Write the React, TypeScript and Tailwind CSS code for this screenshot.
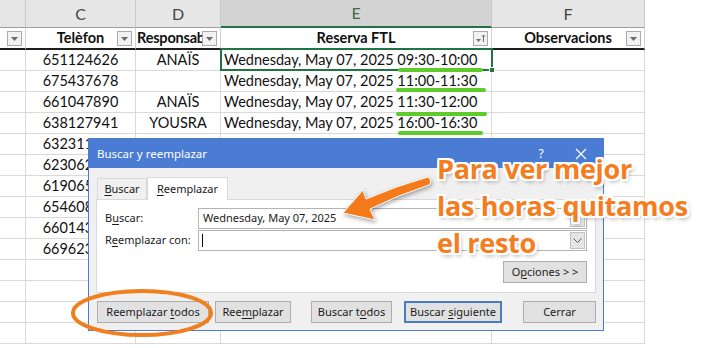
import React from "react";

const cols = [26, 110, 85, 271, 153];
const letters = ["", "C", "D", "E", "F"];

const rows: [string, string, string, string][] = [
  ["651124626", "ANAÏS", "Wednesday, May 07, 2025", "09:30-10:00"],
  ["675437678", "", "Wednesday, May 07, 2025", "11:00-11:30"],
  ["661047890", "ANAÏS", "Wednesday, May 07, 2025", "11:30-12:00"],
  ["638127941", "YOUSRA", "Wednesday, May 07, 2025", "16:00-16:30"],
  ["632311458", "", "", ""],
  ["623062917", "", "", ""],
  ["619065340", "", "", ""],
  ["654608123", "", "", ""],
  ["660143872", "", "", ""],
  ["669623015", "", "", ""],
  ["", "", "", ""],
  ["", "", "", ""],
  ["", "", "", ""],
  ["", "", "", ""],
];

const FilterBtn = ({ sort }: { sort?: boolean }) => (
  <span className="absolute right-[3px] top-[3px] w-[15px] h-[15px] border border-[#ababab] bg-[#f2f2f2] flex items-center justify-center">
    {sort ? (
      <svg width="11" height="9" viewBox="0 0 11 9">
        <path d="M1 5h5L3.5 8z" fill="#6b6b6b" />
        <path d="M8.5 1v7M7 2.6L8.5 1 10 2.6" stroke="#6b6b6b" strokeWidth="1" fill="none" />
      </svg>
    ) : (
      <svg width="7" height="4" viewBox="0 0 7 4">
        <path d="M0 0h7L3.5 4z" fill="#6b6b6b" />
      </svg>
    )}
  </span>
);

const U = ({ children }: { children: React.ReactNode }) => <span className="underline underline-offset-2">{children}</span>;

const Btn = ({ w, children, focus }: { w: string; children: React.ReactNode; focus?: boolean }) => (
  <div
    className={`${w} h-[22px] flex items-center justify-center bg-[#e1e1e1] ${
      focus ? "border-2 border-[#4a7cc4]" : "border border-[#adadad]"
    } text-[#1a1a1a]`}
  >
    <span className="whitespace-pre">{children}</span>
  </div>
);

function Sheet() {
  return (
    <div className="flex flex-col font-['Lato',sans-serif] text-[14.5px] text-[#111]">
      <div className="flex h-[28px] bg-[#e6e6e6]">
        {cols.map((w, i) => (
          <div
            key={i}
            style={{ width: w }}
            className={`h-full flex items-center justify-center border-r border-[#c8c8c8] text-[16px] ${
              i === 3 ? "bg-[#d3d3d3] text-[#3d6b4c] border-b-2 border-b-[#217346]" : "text-[#444] border-b border-b-[#9e9e9e]"
            }`}
          >
            {letters[i]}
          </div>
        ))}
        <div className="flex-1 bg-white" />
      </div>
      <div className="flex h-[22px]">
        {["", "Telèfon", "Responsab", "Reserva FTL", "Observacions"].map((t, i) => (
          <div
            key={i}
            style={{ width: cols[i] }}
            className="relative h-full border-r border-[#d4d4d4] border-b-2 border-b-[#1e1e1e] bg-white flex items-center justify-center font-bold text-[14.5px] overflow-hidden"
          >
            <span className={i === 2 ? "w-full pl-[1px] text-left whitespace-nowrap tracking-[-0.2px]" : ""}>{t}</span>
            <FilterBtn sort={i === 3} />
          </div>
        ))}
        <div className="flex-1" />
      </div>
      {rows.map((r, ri) => (
        <div key={ri} className="flex h-[21px]">
          {cols.map((w, i) => (
            <div
              key={i}
              style={{ width: w }}
              className={`h-full border-r border-b border-[#d9d9d9] flex items-center whitespace-nowrap overflow-hidden ${
                i === 3 ? "pl-[3px]" : "justify-center"
              }`}
            >
              {i === 1 ? r[0] : i === 2 ? r[1] : i === 3 && r[2] ? `${r[2]} ${r[3]}` : ""}
            </div>
          ))}
          <div className="flex-1" />
        </div>
      ))}
    </div>
  );
}

function Dialog() {
  return (
    <div className="absolute left-[88px] top-[138px] w-[516px] h-[193px] border border-[#4a7cd4] bg-[#f0f0f0] flex flex-col font-['Noto_Sans',sans-serif] text-[11px] text-[#1a1a1a]">
      <div className="h-[29px] bg-[#4a7cd4] flex items-center pl-[8px] text-white text-[11.5px]">
        <span className="flex-1">Buscar y reemplazar</span>
        <span className="w-[20px] text-center text-[12px] mr-[24px]">?</span>
        <svg width="12" height="12" viewBox="0 0 12 12" className="mr-[16px]">
          <path d="M1 1l10 10M11 1L1 11" stroke="#fff" strokeWidth="1.2" />
        </svg>
      </div>
      <div className="flex flex-col px-[7px] pt-[8px]">
        <div className="flex items-end h-[23px] pl-[1px]">
          <div className="h-[21px] w-[50px] border border-b-0 border-[#d9d9d9] flex items-center justify-center">
            <span>
              <U>B</U>uscar
            </span>
          </div>
          <div className="h-[23px] w-[81px] border border-b-0 border-[#d9d9d9] bg-white flex items-center justify-center -mb-px relative z-10">
            <span>
              <U>R</U>eemplazar
            </span>
          </div>
        </div>
        <div className="h-[94px] w-[500px] bg-white border border-[#d9d9d9] flex flex-col pl-[8px] pr-[8px] pt-[8px]">
          <div className="flex items-center h-[21px]">
            <span className="w-[93px]">
              B<U>u</U>scar:
            </span>
            <div className="flex-1 h-[21px] border border-[#b4b4b4] bg-white flex items-center pl-[4px] relative">
              <span>Wednesday, May 07, 2025</span>
              <span className="absolute right-[1px] top-[1px] w-[15px] h-[17px] bg-[#e5e5e5] border border-[#c2c2c2]" />
            </div>
          </div>
          <div className="flex items-center h-[21px] mt-[1px]">
            <span className="w-[93px]">
              R<U>e</U>emplazar con:
            </span>
            <div className="flex-1 h-[21px] border border-[#b4b4b4] bg-white flex items-center pl-[3px] relative">
              <span className="w-px h-[13px] bg-black" />
              <span className="absolute right-[1px] top-[1px] w-[15px] h-[17px] bg-[#e5e5e5] border border-[#c2c2c2] flex items-center justify-center">
                <svg width="9" height="5" viewBox="0 0 9 5">
                  <path d="M0.5 0.5L4.5 4.5 8.5 0.5" stroke="#555" fill="none" />
                </svg>
              </span>
            </div>
          </div>
          <div className="flex justify-end mt-[10px]">
            <Btn w="w-[84px]">
              O<U>p</U>ciones &gt; &gt;
            </Btn>
          </div>
        </div>
        <div className="flex mt-[8px] pl-[1px]">
          <Btn w="w-[112px]">
            Reemplazar <U>t</U>odos
          </Btn>
          <div className="ml-[6px]">
            <Btn w="w-[76px]">
              Ree<U>m</U>plazar
            </Btn>
          </div>
          <div className="ml-[20px]">
            <Btn w="w-[81px]">
              Buscar t<U>o</U>dos
            </Btn>
          </div>
          <div className="ml-[12px]">
            <Btn w="w-[98px]" focus>
              Buscar <U>s</U>iguiente
            </Btn>
          </div>
          <div className="ml-[21px]">
            <Btn w="w-[73px]">Cerrar</Btn>
          </div>
        </div>
      </div>
    </div>
  );
}

export default function App() {
  return (
    <div className="relative w-[704px] h-[348px] overflow-hidden bg-white">
      <Sheet />
      {/* selection + handle */}
      <div className="absolute left-[220px] top-[48px] w-[273px] h-[23px] border-2 border-[#217346]" />
      <div className="absolute left-[489px] top-[67px] w-[6px] h-[6px] bg-[#217346] border border-white" />
      {/* green underlines */}
      <div className="absolute left-[398px] top-[68px] w-[85px] h-[4px] rounded-full bg-[#5ecb2a]" />
      <div className="absolute left-[396px] top-[88px] w-[90px] h-[4px] rounded-full bg-[#5ecb2a]" />
      <div className="absolute left-[396px] top-[112px] w-[91px] h-[4px] rounded-full bg-[#5ecb2a]" />
      <div className="absolute left-[398px] top-[131px] w-[85px] h-[4px] rounded-full bg-[#5ecb2a]" />
      <Dialog />
      {/* orange ellipse and arrow */}
      <svg className="absolute left-0 top-0" width="704" height="348" viewBox="0 0 704 348">
        <ellipse cx="142" cy="313" rx="69" ry="22" fill="none" stroke="#f07f1e" strokeWidth="4" />
        <path
          d="M343 213 L363 190 L366 199 Q396 186 428 177 Q433 181 429 185 Q398 195 370 209 L375 220 Z"
          fill="#f47a1c"
          stroke="#ffffff"
          strokeWidth="1"
          style={{ filter: "drop-shadow(1px 2px 2px rgba(0,0,0,0.35))" }}
        />
      </svg>
      <div className="absolute left-[437px] top-[150px] font-['Open_Sans',sans-serif] font-bold text-[27px] leading-[37px] tracking-[-0.3px] text-[#f47d1f] whitespace-nowrap [text-shadow:2px_0_0_#fff,-2px_0_0_#fff,0_2px_0_#fff,0_-2px_0_#fff,2px_2px_0_#fff,-2px_-2px_0_#fff,2px_-2px_0_#fff,-2px_2px_0_#fff,2px_3px_4px_rgba(0,0,0,0.35)]">
        <div>Para ver mejor</div>
        <div>las horas quitamos</div>
        <div>el resto</div>
      </div>
    </div>
  );
}
